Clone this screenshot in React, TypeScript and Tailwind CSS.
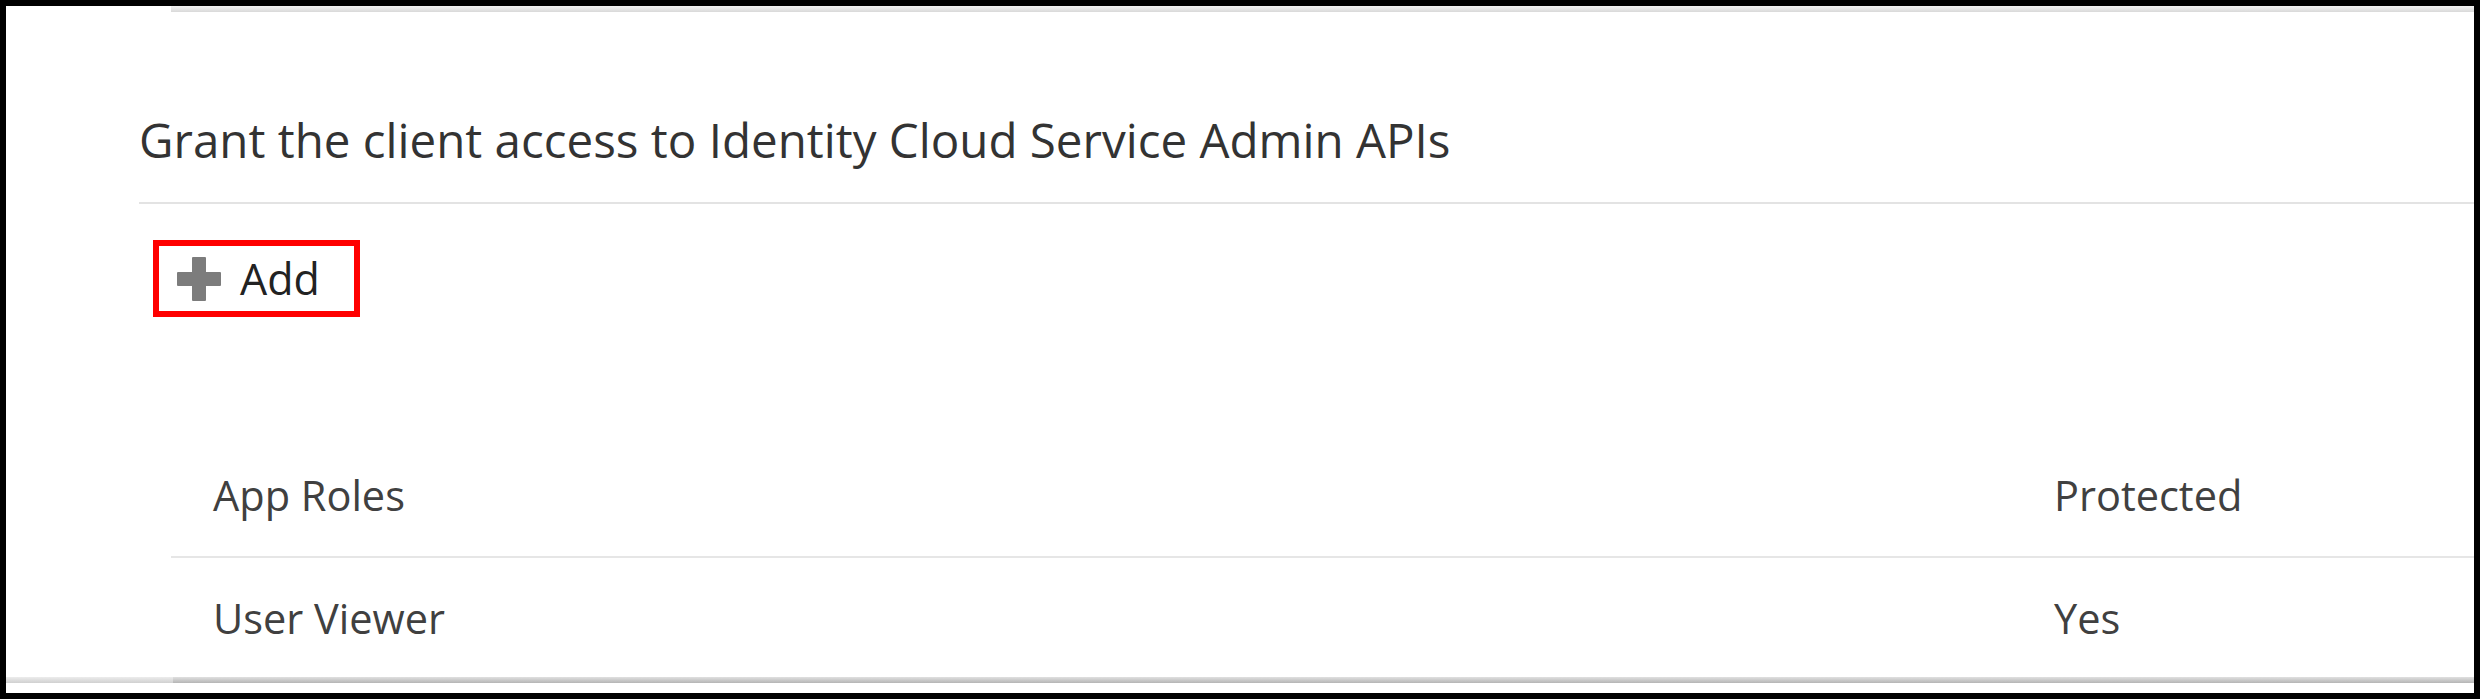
import React from "react";

function PlusIcon() {
  return (
    <svg width="44" height="44" viewBox="0 0 44 44" className="shrink-0">
      <rect x="15" y="0" width="14" height="44" rx="1" fill="#7c7c7c" />
      <rect x="0" y="15" width="44" height="14" rx="1" fill="#7c7c7c" />
    </svg>
  );
}

export default function App() {
  const font = { fontFamily: '"Open Sans", "Noto Sans", Arial, sans-serif' };
  return (
    <div
      className="w-[2480px] h-[699px] box-border border-[6px] border-black bg-white flex flex-col overflow-hidden"
      style={font}
    >
      {/* top band */}
      <div className="ml-[165px] h-[6px] bg-gradient-to-b from-[#f2f2f2] to-[#d9d9d9]" />

      <div className="flex flex-col pl-[133px]">
        {/* title */}
        <div className="mt-[98px] h-[60px] flex items-center text-[47.5px] leading-[60px] text-[#333333]">
          Grant the client access to Identity Cloud Service Admin APIs
        </div>
        <div className="mt-[32px] h-[2px] bg-[#e3e3e3]" />

        {/* add button */}
        <div className="mt-[36px] ml-[14px] w-[207px] h-[77px] box-border border-[6px] border-[#ff0000] flex items-center pl-[18px] gap-[19px]">
          <PlusIcon />
          <span className="text-[43px] leading-[50px] text-[#222222]">Add</span>
        </div>

        {/* table */}
        <div className="ml-[32px] mt-[148px] flex flex-col text-[41.5px] text-[#404040]">
          <div className="h-[60px] flex items-center pl-[42px] leading-[60px]">
            <div className="w-[1841px]">App Roles</div>
            <div>Protected</div>
          </div>
          <div className="mt-[31px] h-[2px] bg-[#e6e6e6]" />
          <div className="mt-[30px] h-[60px] flex items-center pl-[42px] leading-[60px]">
            <div className="w-[1841px]">User Viewer</div>
            <div>Yes</div>
          </div>
        </div>
      </div>

      {/* bottom band */}
      <div className="mt-auto mb-[10px] flex h-[6px]">
        <div className="w-[167px] bg-gradient-to-b from-[#ececec] to-[#d0d0d0]" />
        <div className="flex-1 bg-gradient-to-b from-[#e0e0e0] to-[#b5b5b5]" />
      </div>
    </div>
  );
}
